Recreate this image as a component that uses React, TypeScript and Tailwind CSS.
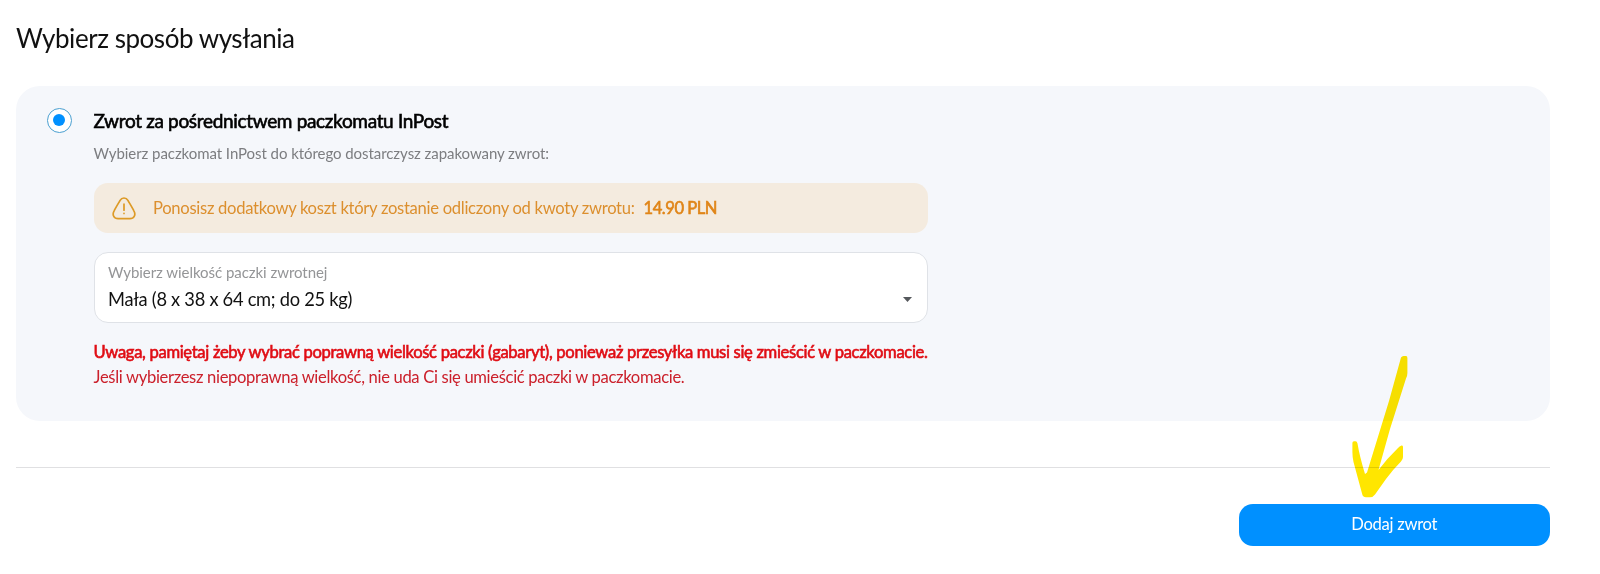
function WarningIcon() {
  return (
    <svg width="24" height="23" viewBox="0 0 24 23" fill="none" stroke="#dd9a26" strokeWidth="1.7" strokeLinecap="round" className="shrink-0">
      <path d="M8.1 3.3C9.8 .2 14.2 .2 15.9 3.3C17.1 5.5 20.6 11.2 22 14.1C24.1 18 21.9 21.7 17.9 21.7H6.1C2.1 21.7 -.1 18 2 14.1C3.4 11.2 6.9 5.5 8.1 3.3Z" />
      <path d="M12 7.2V13.2M12 16.4V16.5" />
    </svg>
  );
}

function HandDrawnArrow() {
  return (
    <svg width="60" height="146" viewBox="0 0 60 146" fill="#ffe600" className="pointer-events-none absolute left-[1350px] top-[354px] mix-blend-multiply">
      <path d="M51 3.5Q52 1.8 54 2H56Q57.4 2 57.4 4V19Q57.4 22 56 24.5L40 75L28.5 116Q37.5 104 48 94Q49.5 92.3 51.5 91.5Q53 91 53 93V103Q53 105.500 51 107.500Q43 115.500 36 125L25 140.500Q23 143.300 20 143.300H16Q13 143.300 12.300 140.500L3.500 108Q2.400 103 2.400 98V89Q2.400 87.300 4 87.300H5.500Q7 87.300 7.500 89.500Q9.500 102 15 120L17 118.500L39 47Z" />
    </svg>
  );
}

export default function App() {
  return (
    <main className="relative h-[574px] w-[1600px] overflow-hidden whitespace-nowrap bg-white pl-4 pr-[50px] pt-[21px] font-['Lato',sans-serif] text-[#111]">
      <h1 className="h-[65px] text-[26px] leading-[34px] tracking-[-0.46px]">Wybierz sposób wysłania</h1>

      <section className="flex h-[335px] gap-[21.5px] rounded-3xl bg-[#f5f7fb] pl-[30.5px] pt-[22px]">
        <span className="mt-[.4px] flex size-[25px] shrink-0 items-center justify-center rounded-full border border-[#4a9fd0] bg-white">
          <span className="mb-px size-3 rounded-full bg-[#0090ff]" />
        </span>

        <div className="w-[835px] pl-[.5px]">
          <h2 className="h-8 text-[19px] leading-[26px] tracking-[-0.33px] text-black [-webkit-text-stroke:.6px_currentColor]">
            Zwrot za pośrednictwem paczkomatu InPost
          </h2>
          <p className="h-[43px] text-[15px] leading-[26px] tracking-[-0.06px] text-[#7c7d80]">
            Wybierz paczkomat InPost do którego dostarczysz zapakowany zwrot:
          </p>

          <div className="flex h-[50px] items-center rounded-[14px] bg-[#f4ebdf] pl-[18px] text-[16.6px] tracking-[-0.29px] text-[#dc8f2e]">
            <WarningIcon />
            <span className="ml-[17.5px]">Ponosisz dodatkowy koszt który zostanie odliczony od kwoty zwrotu:</span>
            <span className="ml-[9px] tracking-[-0.5px] text-[#e08518] [-webkit-text-stroke:.6px_currentColor]">14.90 PLN</span>
          </div>

          <div className="mt-[18.5px] flex h-[71px] items-center justify-between rounded-[14px] border border-[#dfe2e7] bg-white pb-[3px] pl-[13.5px] pr-[15px]">
            <div>
              <div className="h-[26px] text-[15px] leading-[24px] tracking-[-0.05px] text-[#949597]">Wybierz wielkość paczki zwrotnej</div>
              <div className="text-[18.3px] leading-[26px] tracking-[-0.28px]">Mała (8 x 38 x 64 cm; do 25 kg)</div>
            </div>
            <svg width="9" height="5" viewBox="0 0 9 5" fill="#55585c" className="mt-[27px]">
              <path d="M0 0H9L4.500 5Z" />
            </svg>
          </div>

          <div className="mt-[17.5px] text-[16.6px] leading-[25px] tracking-[-0.33px]">
            <p className="tracking-[-0.322px] text-[#e00d14] [-webkit-text-stroke:.6px_currentColor]">
              Uwaga, pamiętaj żeby wybrać poprawną wielkość paczki (gabaryt), ponieważ przesyłka musi się zmieścić w paczkomacie.
            </p>
            <p className="text-[#cb202b]">Jeśli wybierzesz niepoprawną wielkość, nie uda Ci się umieścić paczki w paczkomacie.</p>
          </div>
        </div>
      </section>

      <div className="mt-[46px] flex justify-end border-t border-[#e0e0e2] pt-[36.4px]">
        <button className="h-[42px] w-[311.5px] rounded-[14px] bg-[#0090ff] pb-px text-[16.6px] tracking-[-0.28px] text-white">Dodaj zwrot</button>
      </div>

      <HandDrawnArrow />
    </main>
  );
}
